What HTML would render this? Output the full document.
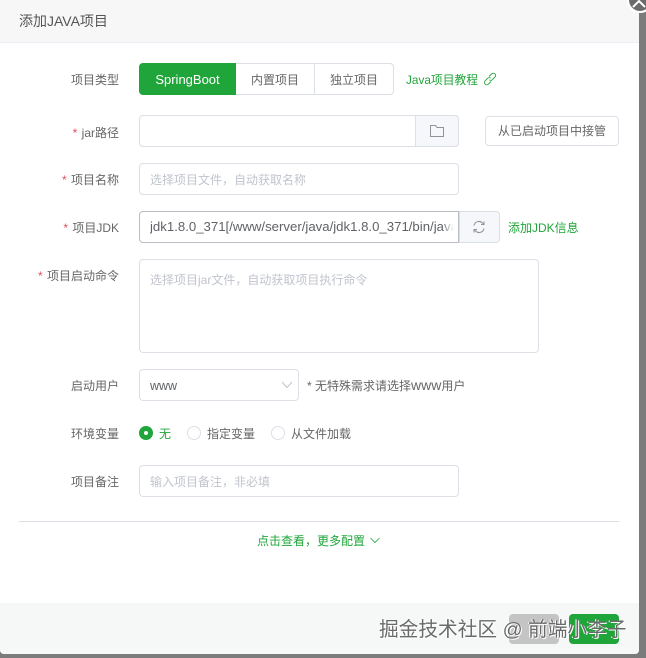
<!DOCTYPE html>
<html lang="zh-CN">
<head>
<meta charset="utf-8">
<title>添加JAVA项目</title>
<style>
html,body{margin:0;padding:0;width:646px;height:658px;overflow:hidden;background:#7b7b7b;}
body{position:relative;font-family:"Liberation Sans","Noto Sans CJK SC",sans-serif;font-size:12px;color:#666;}
div,span,a{position:absolute;box-sizing:border-box;white-space:nowrap;}
.modal{left:0;top:0;width:639px;height:654px;background:#fff;border-radius:0 0 4px 4px;overflow:hidden;}
.blur{left:0;top:0;width:639px;height:654px;filter:blur(.3px);}
.head{left:0;top:0;width:639px;height:43px;background:#f7f7f7;border-bottom:1px solid #ebeef5;font-size:14px;color:#555;line-height:42px;padding-left:19px;}
.foot{left:0;top:603px;width:639px;height:51px;background:#f6f8f8;}
.lab{right:520px;height:20px;line-height:20px;text-align:right;color:#666;}
.lab i{font-style:normal;color:#e0505a;margin-right:1px;}
.inp{background:#fff;border:1px solid #dcdfe6;border-radius:4px;}
.ph{color:#c0c4cc;line-height:20px;height:20px;}
.gr{color:#20a53a;}
.add{background:#f5f7fa;border:1px solid #dcdfe6;}
.radio{width:14px;height:14px;border-radius:50%;border:1px solid #dcdfe6;background:#fff;}
</style>
</head>
<body>
<div class="modal">
<div class="blur">
  <div class="head">添加JAVA项目</div>

  <div class="lab" style="top:70px">项目类型</div>
  <div style="left:139px;top:63px;width:97px;height:32px;background:#20a53a;border-radius:4px 0 0 4px;color:#fff;line-height:34px;text-align:center;font-size:13px">SpringBoot</div>
  <div style="left:236px;top:63px;width:79px;height:32px;border:1px solid #dcdfe6;border-left:0;line-height:32px;text-align:center;color:#666">内置项目</div>
  <div style="left:314px;top:63px;width:80px;height:32px;border:1px solid #dcdfe6;border-left:1px solid #dcdfe6;border-radius:0 4px 4px 0;line-height:32px;text-align:center;color:#666">独立项目</div>
  <span class="gr" style="left:406px;top:70px;line-height:20px;height:20px;font-size:11.8px">Java项目教程</span>
  <svg style="position:absolute;left:483px;top:72px" width="14" height="14" viewBox="0 0 14 14" fill="none" stroke="#20a53a" stroke-width="0.9"><path d="M6 4.5 8.6 1.9a2.2 2.2 0 0 1 3.3 3.2L9.4 7.7a2.2 2.2 0 0 1-3 .1"/><path d="M8 9.5 5.4 12.1a2.2 2.2 0 0 1-3.3-3.2l2.5-2.6a2.2 2.2 0 0 1 3-.1"/></svg>

  <div class="lab" style="top:123px"><i>*</i> jar路径</div>
  <div class="inp" style="left:139px;top:115px;width:320px;height:32px"></div>
  <div class="add" style="left:415px;top:115px;width:44px;height:32px;border-radius:0 4px 4px 0"></div>
  <svg style="position:absolute;left:429px;top:124px" width="16" height="14" viewBox="0 0 16 14" fill="none" stroke="#8f9299" stroke-width="1"><path d="M1.5 12.5V1.5H6.5L8 3.5H14.5V12.5Z"/></svg>
  <div style="left:485px;top:116px;width:134px;height:30px;border:1px solid #dcdfe6;border-radius:4px;line-height:29px;text-align:center;color:#666;background:#fff">从已启动项目中接管</div>

  <div class="lab" style="top:170px"><i>*</i> 项目名称</div>
  <div class="inp" style="left:139px;top:163px;width:320px;height:32px"></div>
  <span class="ph" style="left:150px;top:170px">选择项目文件，自动获取名称</span>

  <div class="lab" style="top:218px"><i>*</i> 项目JDK</div>
  <div style="left:139px;top:211px;width:320px;height:32px;background:#fff;border:1px solid #b9bcc2;border-radius:4px 0 0 4px;overflow:hidden">
    <span style="left:10px;top:5px;width:304px;overflow:hidden;line-height:20px;height:20px;color:#606266;font-size:13.2px">jdk1.8.0_371[/www/server/java/jdk1.8.0_371/bin/java</span>
    <div style="left:302px;top:4px;width:12px;height:22px;background:linear-gradient(90deg,rgba(255,255,255,0),#fff)"></div>
  </div>
  <div class="add" style="left:459px;top:211px;width:41px;height:32px;border-radius:0 4px 4px 0"></div>
  <svg style="position:absolute;left:472px;top:220px" width="14" height="14" viewBox="0 0 14 14" fill="none" stroke="#8f9299" stroke-width="1"><path d="M2 5.5A5 5 0 0 1 10.5 3L12 4.5M12 1.5V4.5H9"/><path d="M12 8.5A5 5 0 0 1 3.5 11L2 9.5M2 12.5V9.5H5"/></svg>
  <span class="gr" style="left:508px;top:218px;line-height:20px;height:20px">添加JDK信息</span>

  <div class="lab" style="top:266px"><i>*</i> 项目启动命令</div>
  <div class="inp" style="left:139px;top:259px;width:400px;height:94px"></div>
  <span class="ph" style="left:150px;top:270px">选择项目jar文件，自动获取项目执行命令</span>

  <div class="lab" style="top:376px">启动用户</div>
  <div class="inp" style="left:139px;top:369px;width:160px;height:32px"></div>
  <span style="left:150px;top:376px;line-height:20px;height:20px;color:#606266;font-size:12.5px">www</span>
  <svg style="position:absolute;left:281px;top:381px" width="12" height="8" viewBox="0 0 12 8" fill="none" stroke="#c0c4cc" stroke-width="1"><path d="M1 1 6 6.5 11 1"/></svg>
  <span style="left:307px;top:375px;line-height:20px;height:20px;color:#666">* 无特殊需求请选择<span style="position:static;font-size:14px">www</span>用户</span>

  <div class="lab" style="top:424px">环境变量</div>
  <div class="radio" style="left:139px;top:426px;background:#20a53a;border-color:#20a53a"></div>
  <div style="left:144px;top:431px;width:4px;height:4px;border-radius:50%;background:#fff"></div>
  <span class="gr" style="left:159px;top:424px;line-height:20px;height:20px">无</span>
  <div class="radio" style="left:187px;top:426px"></div>
  <span style="left:207px;top:424px;line-height:20px;height:20px">指定变量</span>
  <div class="radio" style="left:271px;top:426px"></div>
  <span style="left:291px;top:424px;line-height:20px;height:20px">从文件加载</span>

  <div class="lab" style="top:472px">项目备注</div>
  <div class="inp" style="left:139px;top:465px;width:320px;height:32px"></div>
  <span class="ph" style="left:150px;top:472px">输入项目备注，非必填</span>

  <div style="left:19px;top:521px;width:600px;height:1px;background:#dcdfe6"></div>
  <span class="gr" style="left:257px;top:531px;line-height:20px;height:20px">点击查看，更多配置</span>
  <svg style="position:absolute;left:370px;top:537px" width="10" height="7" viewBox="0 0 10 7" fill="none" stroke="#20a53a" stroke-width="0.8"><path d="M.5 1 5 5.5 9.5 1"/></svg>

  <div class="foot"></div>
  <div style="left:509px;top:614px;width:50px;height:30px;background:#c4c4c4;border-radius:4px"></div>
  <div style="left:569px;top:614px;width:50px;height:30px;background:#20a53a;border-radius:4px"></div>
  <span style="left:379px;top:618px;font-size:19.7px;line-height:24px;height:24px;color:#6a6a6a;text-shadow:1px 1px 0 #fff,-1px 0 0 #fff">掘金技术社区 @ 前端小李子</span>
</div>
</div>
<div style="left:627px;top:-13px;width:26px;height:26px;border-radius:50%;background:#6b6b6b;border:2px solid #fff"></div>
<svg style="position:absolute;left:632px;top:0" width="14" height="8" viewBox="0 0 14 8" fill="none" stroke="#fff" stroke-width="2"><path d="M1 7 7 1 13 7"/></svg>
</body>
</html>
